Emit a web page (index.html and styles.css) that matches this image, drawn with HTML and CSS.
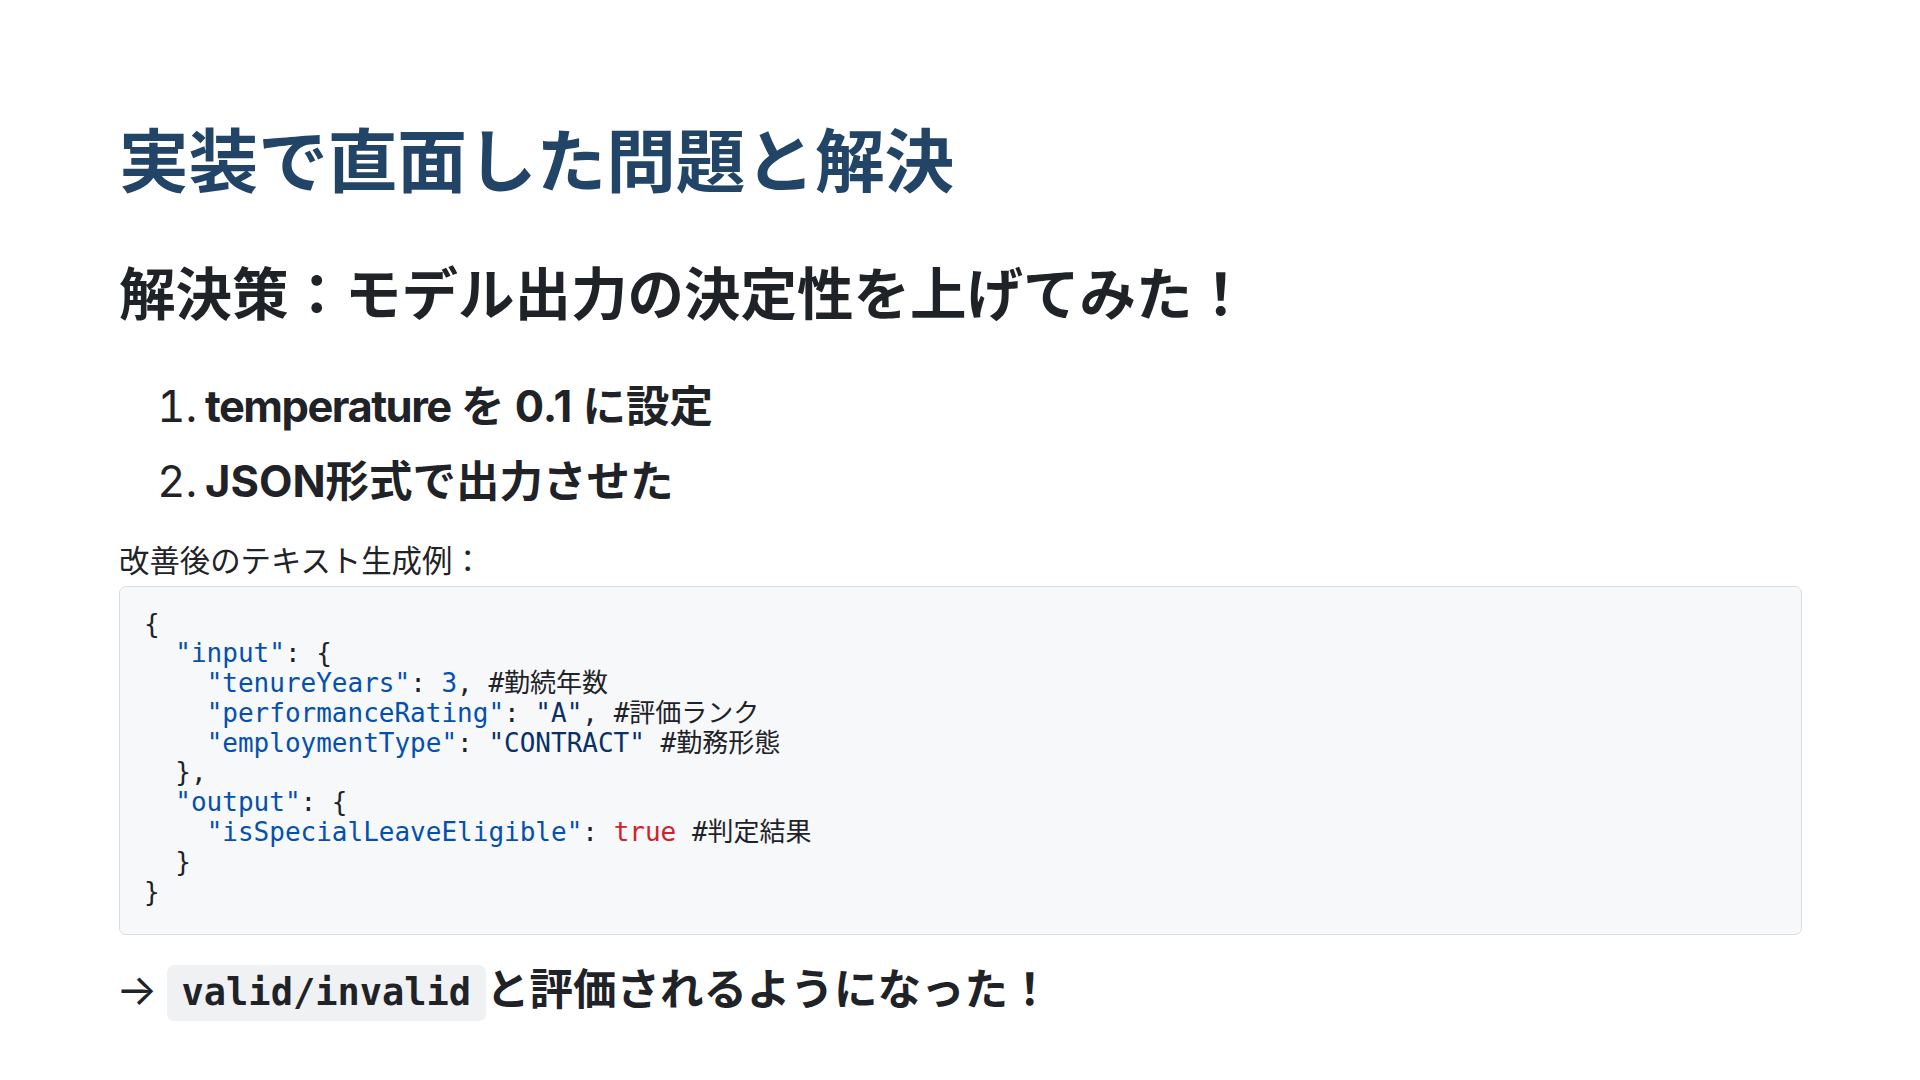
FILE: index.html
```html
<!DOCTYPE html>
<html lang="ja">
<head>
<meta charset="utf-8">
<title>実装で直面した問題と解決</title>
<link rel="stylesheet" href="styles.css">
</head>
<body>
<section class="slide">
  <h1 class="title">実装で直面した問題と解決</h1>
  <h2 class="subtitle">解決策：モデル出力の決定性を上げてみた！</h2>
  <ol class="steps">
    <li><strong><span class="tight">temperature</span> を 0.1 に設定</strong></li>
    <li><strong>JSON形式で出力させた</strong></li>
  </ol>
  <p class="caption">改善後のテキスト生成例：</p>
  <pre class="codeblock"><code>{
  <span class="k">"input"</span>: {
    <span class="k">"tenureYears"</span>: <span class="n">3</span>, #勤続年数
    <span class="k">"performanceRating"</span>: <span class="s">"A"</span>, #評価ランク
    <span class="k">"employmentType"</span>: <span class="s">"CONTRACT"</span> #勤務形態
  },
  <span class="k">"output"</span>: {
    <span class="k">"isSpecialLeaveEligible"</span>: <span class="b">true</span> #判定結果
  }
}</code></pre>
  <p class="result"><span class="arrow">→</span> <strong><code class="inline">valid/invalid</code>と評価されるようになった！</strong></p>
</section>
</body>
</html>
```
FILE: styles.css
```css
html, body {
  margin: 0;
  padding: 0;
  background: #ffffff;
}

.slide {
  width: 1920px;
  height: 1080px;
  box-sizing: border-box;
  padding: 119px 118px 0 119px;
  font-family: Inter, "Noto Sans CJK JP", sans-serif;
  font-size: 43.5px;
  color: #1f2328;
  display: flex;
  flex-direction: column;
}

.title {
  margin: 0;
  font-size: 69.6px;
  line-height: 87px;
  font-weight: 700;
  color: #224466;
}

.subtitle {
  margin: 53px 0 0;
  font-size: 56.5px;
  line-height: 71px;
  font-weight: 700;
  color: #1f2328;
}

.steps {
  margin: 44px 0 0;
  padding: 0 0 0 86px;
  line-height: 65px;
}

.steps li::marker {
  content: counter(list-item) ".\2009";
}

.steps li + li {
  margin-top: 9.5px;
}

.steps strong {
  font-weight: 700;
}

.tight {
  letter-spacing: -0.035em;
}

.caption {
  margin: 25px 0 0;
  font-size: 30.4px;
  line-height: 45px;
}

.codeblock {
  margin: 2px 0 0;
  padding: 23px 24px 27px;
  background: #f6f8fa;
  border: 1px solid #d8dee4;
  border-radius: 7px;
  font-family: "DejaVu Sans Mono", monospace;
  font-size: 26px;
  line-height: 29.8px;
  color: #1f2328;
  overflow: hidden;
}

.codeblock code {
  font-family: "DejaVu Sans Mono", "Noto Sans CJK JP", monospace;
}

.k { color: #0550ae; }
.n { color: #0550ae; }
.s { color: #0a3069; }
.b { color: #cf222e; }

.result {
  margin: 22px 0 0;
  line-height: 65px;
}

.arrow {
  font-weight: 400;
  margin-left: -3px;
  margin-right: -3px;
}

.result strong {
  font-weight: 700;
}

.inline {
  font-family: "DejaVu Sans Mono", monospace;
  font-size: 37px;
  font-weight: 700;
  background: #eff1f3;
  border-radius: 7px;
  padding: 0.17em 0.4em;
}
```
